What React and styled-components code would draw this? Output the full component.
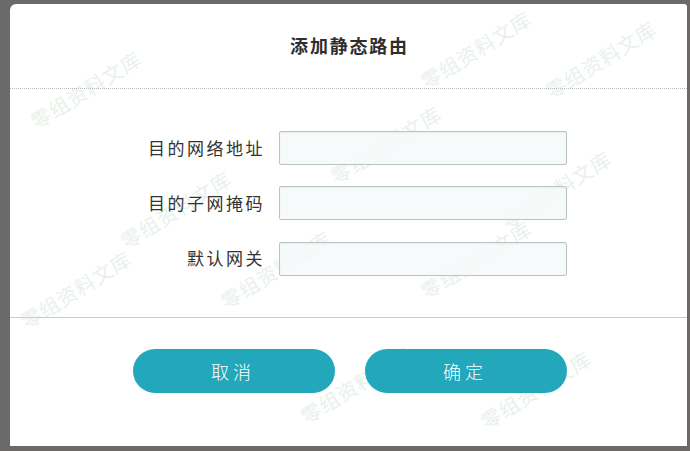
import React from "react";
import styled, { createGlobalStyle } from "styled-components";

const Global = createGlobalStyle`
  html, body { margin: 0; padding: 0; }
  body {
    background: #6b6a68;
    font-family: "Noto Sans CJK SC", "Noto Sans", sans-serif;
    width: 690px;
    height: 451px;
    overflow: hidden;
  }
`;

const Page = styled.div`
  width: 690px;
  height: 451px;
  padding: 4px 3px 5px 10px;
  box-sizing: border-box;
`;

const Dialog = styled.div`
  position: relative;
  width: 677px;
  height: 442px;
  background: #ffffff;
  border-radius: 6px 3px 0 0;
  overflow: hidden;
  display: flex;
  flex-direction: column;
`;

const Header = styled.div`
  position: relative;
  z-index: 1;
  height: 84px;
  border-bottom: 1px dotted #b9bcbc;
  display: flex;
  align-items: center;
  justify-content: center;
  padding-left: 2px;
`;

const Title = styled.h2`
  margin: 0 0 2px;
  font-size: 18px;
  font-weight: 700;
  color: #2e2e2e;
  letter-spacing: 1.8px;
`;

const Form = styled.div`
  position: relative;
  z-index: 1;
  border-bottom: 1px solid #cccccc;
  display: grid;
  grid-template-columns: 255px 288px;
  column-gap: 14px;
  row-gap: 21px;
  align-content: start;
  padding-top: 42px;
  box-sizing: border-box;
  height: 229px;
`;

const Label = styled.label`
  text-align: right;
  font-size: 17px;
  letter-spacing: 2.5px;
  color: #333333;
  line-height: 34px;
`;

const Input = styled.input`
  height: 34px;
  box-sizing: border-box;
  border: 1px solid #bac4c5;
  border-radius: 2px;
  background: rgba(246, 249, 249, 0.85);
  box-shadow: inset 0 1px 2px rgba(0, 0, 0, 0.06);
  outline: none;
  margin-top: ${(p) => p.$shift || 0}px;
`;

const Footer = styled.div`
  position: relative;
  z-index: 1;
  display: flex;
  justify-content: center;
  gap: 30px;
  padding-top: 31px;
  padding-left: 3px;
`;

const Button = styled.button`
  width: 202px;
  height: 44px;
  border: none;
  border-radius: 22px;
  background: #22a7bb;
  color: #ffffff;
  font-family: "Noto Sans CJK SC", sans-serif;
  font-size: 18px;
  font-weight: 300;
  letter-spacing: 4px;
  padding-left: 4px;
  cursor: pointer;
`;

const Watermarks = styled.div`
  position: absolute;
  inset: 0;
  pointer-events: none;
  z-index: 0;
`;

const Mark = styled.span`
  position: absolute;
  font-size: 20px;
  font-weight: 400;
  color: #e9f1eb;
  white-space: nowrap;
  transform: rotate(-32deg);
  transform-origin: left bottom;
  letter-spacing: 1px;
`;

const marks = [
  [30, 130], [420, 90], [545, 100],
  [120, 250], [330, 185], [500, 230],
  [20, 330], [220, 310], [420, 300],
  [300, 425], [480, 430],
];

export default function App() {
  return (
    <>
      <Global />
      <Page>
        <Dialog>
          <Watermarks>
            {marks.map(([x, y], i) => (
              <Mark key={i} style={{ left: x, top: y - 28 }}>零组资料文库</Mark>
            ))}
          </Watermarks>
          <Header>
            <Title>添加静态路由</Title>
          </Header>
          <Form>
            <Label>目的网络地址</Label>
            <Input />
            <Label>目的子网掩码</Label>
            <Input />
            <Label>默认网关</Label>
            <Input $shift={1} />
          </Form>
          <Footer>
            <Button>取消</Button>
            <Button>确定</Button>
          </Footer>
        </Dialog>
      </Page>
    </>
  );
}
